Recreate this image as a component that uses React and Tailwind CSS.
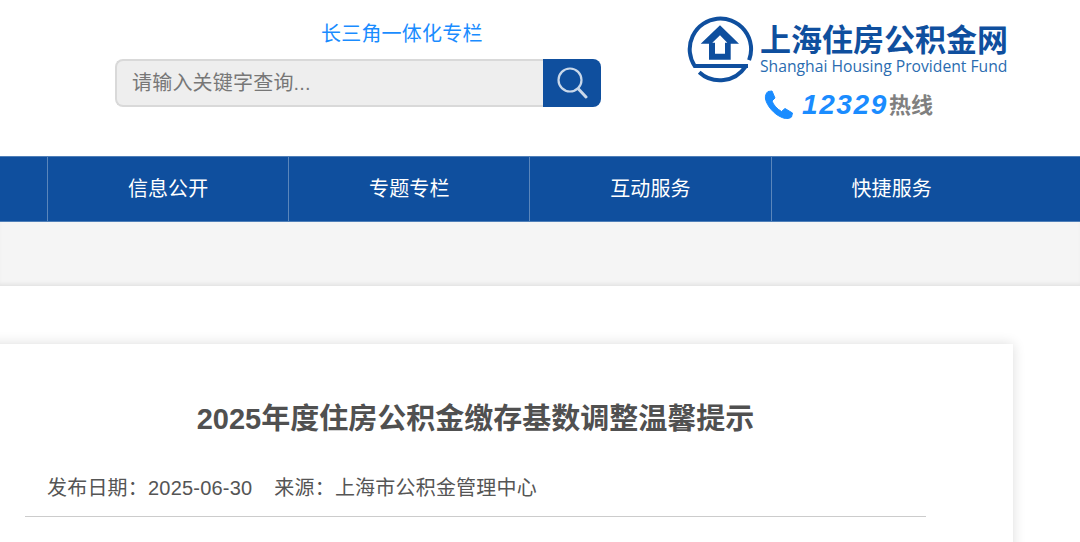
const FONT = "font-['Liberation_Sans','Noto_Sans_CJK_SC',sans-serif]";

const navItems = ['信息公开', '专题专栏', '互动服务', '快捷服务'];

function LogoMark() {
  return (
    <svg width="68" height="68" viewBox="0 0 68 68" fill="none" className="shrink-0">
      <path d="M62.1 45.1 A30.7 30.7 0 1 0 7.7 51 H61" stroke="#0f4f9e" strokeWidth="4" />
      <path d="M58.5 51.6 A30.7 30.7 0 0 1 12.2 57.2" stroke="#0f4f9e" strokeWidth="4" />
      <path
        fillRule="evenodd"
        d="M33 10.3 L52 28.7 H43.7 V44.7 H22 V28.7 H13.7 Z M33 20.3 L25.3 27.7 H28 V38.7 H38 V27.7 H40.3 Z"
        fill="#0f4f9e"
      />
    </svg>
  );
}

function SearchBox() {
  return (
    <div className="flex h-[48px] w-[486px]">
      <div className="flex flex-1 items-center rounded-l-lg border-2 border-r-0 border-[#d9d9d9] bg-[#eeeeee] pl-[15px] text-[20px] tracking-[0.2px] text-[#777777]">
        请输入关键字查询...
      </div>
      <div className="flex w-[58px] items-center justify-center rounded-r-lg bg-[#0f4f9e]">
        <svg width="32" height="34" viewBox="0 0 32 34" fill="none" stroke="#c9d8ea" strokeWidth="2.2" strokeLinecap="round">
          <circle cx="14" cy="14" r="11.5" />
          <path d="M22.5 23 L30 31" strokeWidth="3" />
        </svg>
      </div>
    </div>
  );
}

export default function App() {
  return (
    <div className={`h-[542px] w-[1080px] overflow-hidden bg-white ${FONT}`}>
      {/* Header */}
      <header className="flex h-[156px] pl-[115px]">
        <div className="flex w-[572px] flex-col pt-[21px]">
          <a className="ml-[206px] text-[20px] leading-[27px] tracking-[0.2px] text-[#1a8cff]">长三角一体化专栏</a>
          <div className="mt-[11px]">
            <SearchBox />
          </div>
        </div>
        <div className="flex flex-col pt-[15px]">
          <div className="flex items-center gap-[5px]">
            <LogoMark />
            <div className="flex flex-col">
              <span className="text-[31px] font-bold leading-[34px] text-[#0f4f9e]">上海住房公积金网</span>
              <span className="whitespace-nowrap font-['Open_Sans',sans-serif] text-[15.7px] leading-[17px] text-[#2a6cb0]">
                Shanghai Housing Provident Fund
              </span>
            </div>
          </div>
          <div className="ml-[77px] mt-[1px] flex items-center">
            <svg width="30" height="30" viewBox="0 0 30 30" fill="#1a8cff" stroke="#1a8cff" strokeLinejoin="round" className="shrink-0">
              <path d="M4 1.5 L8 1 L11 8 L8 11 C9.5 15 13 19 17.5 21.5 L21 18.5 L28.5 23 L27.5 27 C25 29 21 29 17 27 C10 24 3 16 1.5 9 C1 6 2 3 4 1.5 Z" />
            </svg>
            <span className="ml-[8px] text-[28px] font-bold italic tracking-[1.6px] text-[#1a8cff]">12329</span>
            <span className="ml-[1px] text-[22px] font-bold text-[#808080]">热线</span>
          </div>
        </div>
      </header>

      {/* Nav */}
      <nav className="flex h-[66px] border-y border-[#4f7fb8] bg-[#0f4f9e] pl-[47px]">
        {navItems.map((item) => (
          <div key={item} className="flex w-[241.2px] items-center justify-center border-l border-[#5a86bb] text-[20px] tracking-[0.1px] text-white">
            {item}
          </div>
        ))}
      </nav>

      {/* Grey strip */}
      <div className="h-[64px] bg-[#f5f5f5] shadow-[inset_0_-4px_4px_-2px_rgba(0,0,0,0.08)]" />

      {/* Article card, runs off the left edge */}
      <main className="pt-[58px]">
        <article className="-ml-[20px] h-[300px] w-[1033px] bg-white pl-[45px] pr-[87px] shadow-[0_0_12px_rgba(0,0,0,0.14)]">
          <h1 className="pt-[55px] text-center text-[29px] font-bold leading-[40px] text-[#505050]">
            2025年度住房公积金缴存基数调整温馨提示
          </h1>
          <div className="mt-[22px] flex h-[56px] items-center border-b border-[#cccccc] pb-[2px] pl-[22px] text-[20px] tracking-[0.2px] text-[#555555]">
            <span>发布日期：2025-06-30</span>
            <span className="ml-[22px]">来源：上海市公积金管理中心</span>
          </div>
        </article>
      </main>
    </div>
  );
}
